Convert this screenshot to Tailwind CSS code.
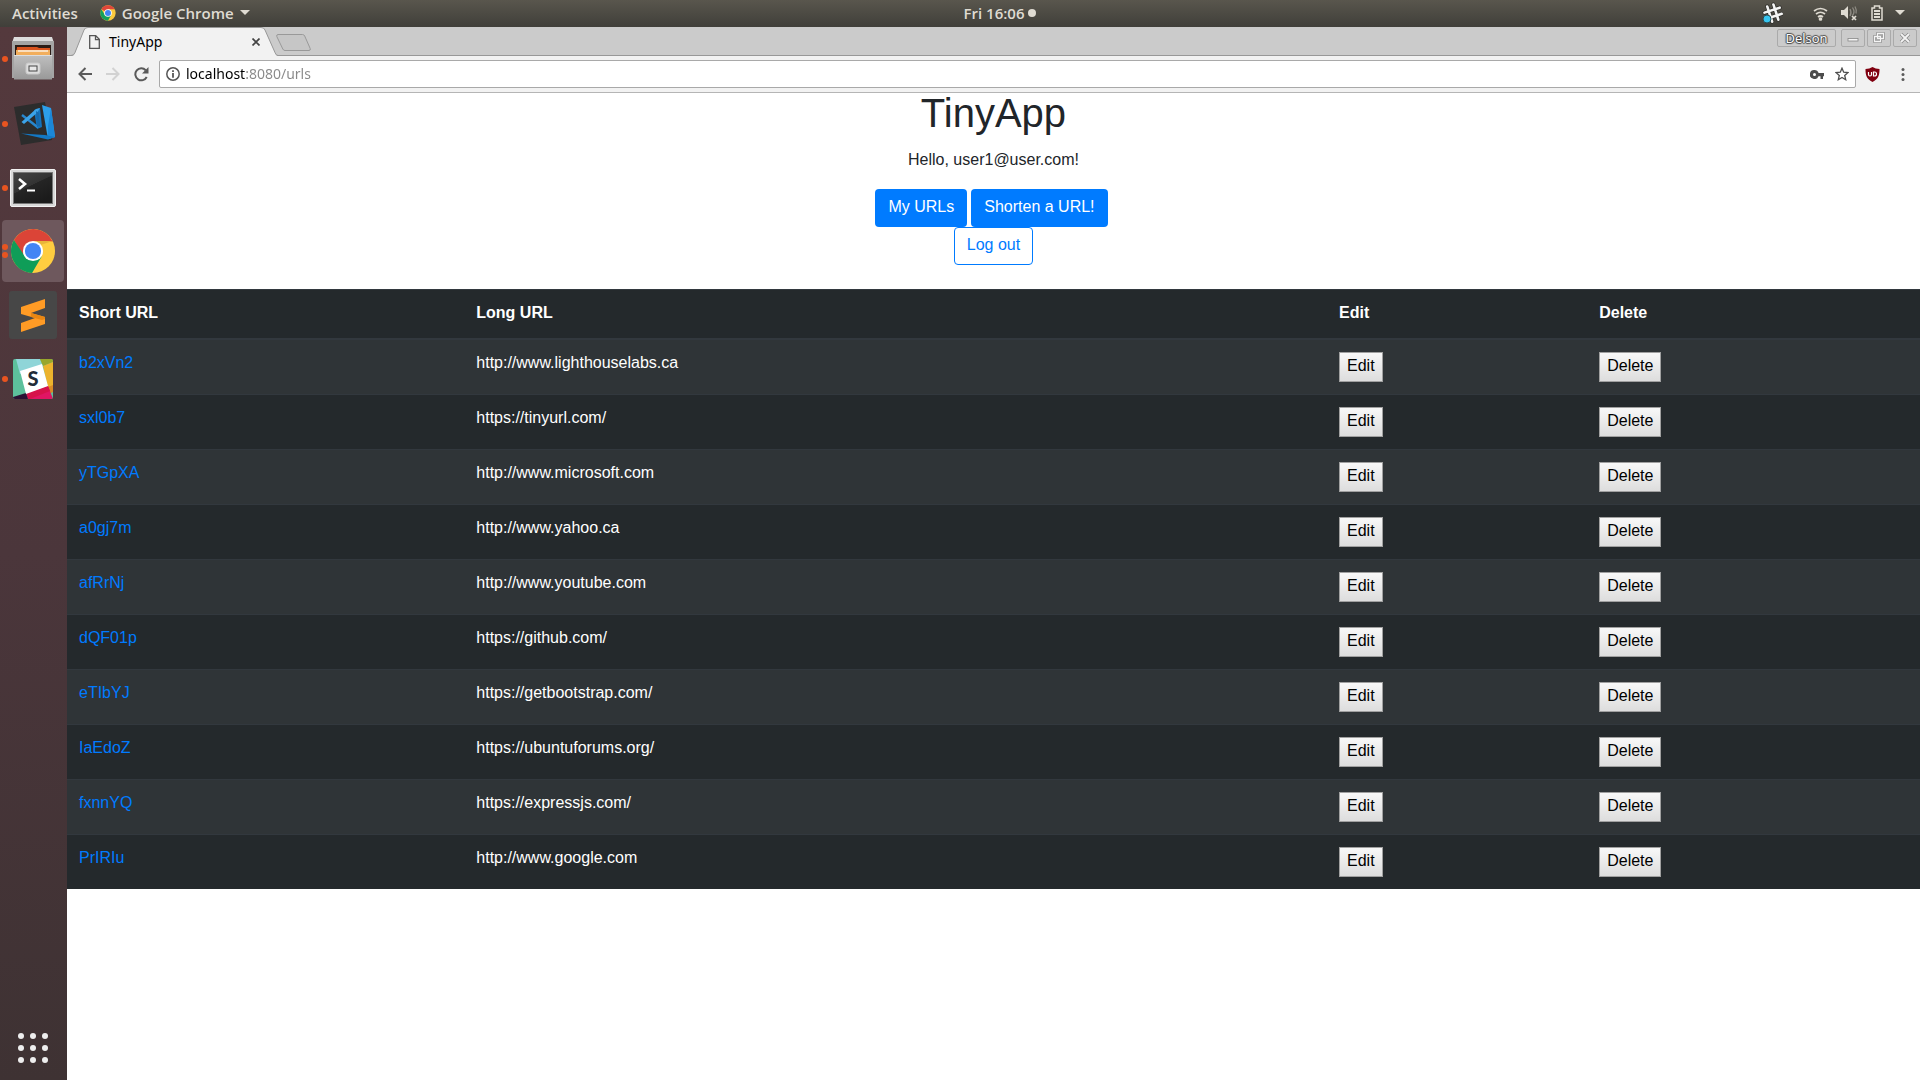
<!DOCTYPE html>
<html lang="en">
<head>
<meta charset="utf-8">
<title>TinyApp</title>
<script src="https://cdn.jsdelivr.net/npm/@tailwindcss/browser@4"></script>
</head>
<body class="flex min-h-screen flex-col bg-white font-['Liberation_Sans',Arial,sans-serif] text-base text-[#212529]">

<!-- System bar -->
<header class="grid h-[27px] grid-cols-[minmax(0,1fr)_auto_minmax(0,1fr)] items-center bg-linear-to-b from-[#59564d] to-[#403f3a] px-3 pb-[2px] font-['Open_Sans',sans-serif] text-[15px] font-semibold text-[#dfdbd2]">
  <div class="flex items-center gap-[22px]">
    <button class="leading-5">Activities</button>
    <button class="flex items-center leading-5">
      <svg class="mr-[6px] size-4" viewBox="0 0 48 48"><circle cx="24" cy="24" r="23" fill="#fbc93d"/><path d="M24 24 4 12.500A23 23 0 0 1 44 12.500H24Z" fill="#e0463a"/><path d="M4 12.500A23 23 0 0 0 24 47l10-17.500-20-1Z" fill="#15a05c"/><circle cx="24" cy="24" r="11.500" fill="#fff"/><circle cx="24" cy="24" r="9" fill="#4285f4"/></svg>
      Google Chrome
      <svg class="ml-[6px] h-[5px] w-[10px]" viewBox="0 0 10 5"><path d="M0 0h10L5 5Z" fill="#dfdbd2"/></svg>
    </button>
  </div>
  <button class="ml-20 flex items-center gap-1 leading-5">Fri 16:06 <span class="size-2 rounded-full bg-[#dfdbd2]"></span></button>
  <div class="flex items-center justify-end">
    <svg class="mr-[30px] h-[22px] w-[22px]" viewBox="0 0 22 22" fill="none"><g transform="rotate(-18 12 11)" stroke-linecap="round"><path d="M8.500 3v16M15 3v16M4 8h16M4 14.500h16" stroke="#2d2c28" stroke-width="4"/><path d="M8.500 3v16M15 3v16M4 8h16M4 14.500h16" stroke="#f4f4f4" stroke-width="2.600"/></g><circle cx="6" cy="17" r="4" fill="#36c5f0" stroke="#2d4a50"/></svg>
    <svg class="mr-[12px] h-4 w-[15px]" viewBox="0 0 15 16" fill="none" stroke="#dfdbd2" stroke-width="1.700"><path d="M1 6q6.500-5 13 0"/><path d="M3 9q4.500-3.500 9 0" /><path d="M5 12q2.500-2 5 0"/><circle cx="7.500" cy="14" r="1" fill="#dfdbd2"/></svg>
    <svg class="mr-[13px] h-4 w-[18px]" viewBox="0 0 18 16" fill="none"><path d="M1 5h3l4-4v13l-4-4H1Z" fill="#dfdbd2"/><path d="M10 4q2 3.500 0 7M12.500 2.500q3 4.500 0 8M15 1.500q2 3.500 1 7" stroke="#8d8a82" stroke-width="1.300"/><path d="m12 11 4 4m0-4-4 4" stroke="#dfdbd2" stroke-width="1.700"/></svg>
    <svg class="mr-[12px] h-4 w-3" viewBox="0 0 12 16" fill="none" stroke="#dfdbd2" stroke-width="1.500"><path d="M1 3h2.500V1h5v2H11v12H1Z"/><path d="M3 6h6M3 9h6M3 12h6" stroke-width="1.800"/></svg>
    <svg class="mr-[3px] h-[5px] w-[10px]" viewBox="0 0 10 5"><path d="M0 0h10L5 5Z" fill="#dfdbd2"/></svg>
  </div>
</header>

<div class="flex flex-1">
  <!-- Application dock -->
  <nav aria-label="Dock" class="flex w-[67px] shrink-0 flex-col items-stretch justify-between bg-linear-to-b from-[#54393d] via-[#4b363b] to-[#3e3233]">
    <div class="flex flex-col">
      <button aria-label="Files" class="flex h-16 items-center">
        <span class="flex w-3 flex-col items-center pr-[2px]"><span class="size-[6px] rounded-full bg-[#e95420]"></span></span>
        <svg class="h-11 w-[42px]" viewBox="0 0 42 44"><defs><linearGradient id="cab" x2="0" y2="1"><stop stop-color="#bfbfbf"/><stop offset="1" stop-color="#999"/></linearGradient></defs><path d="M2 0h38l2 6H0Z" fill="#dcdcdc"/><path d="M0 4h42v37H0Z" fill="#a4a4a4"/><path d="M3 8h36v11H3Z" fill="#2b1c16"/><path d="M5 10h20l2 1h11v8H4Z" fill="#d9541e"/><path d="M4 13h34v6H4Z" fill="#f2ae5c"/><path d="M6 14h30" stroke="#fff" stroke-width="1.200"/><path d="M2 18h38v24.500H2Z" fill="url(#cab)"/><path d="M2 18.500h38" stroke="#ddd"/><rect x="14" y="26" width="14" height="11" rx="2" fill="#ddd" stroke="#c8c8c8"/><rect x="17" y="29" width="8" height="5" fill="#e8e8e8" stroke="#444"/></svg>
      </button>
      <button aria-label="Visual Studio Code" class="flex h-16 items-center pt-[2px]">
        <span class="flex w-[14px] flex-col items-center pr-1"><span class="size-[6px] rounded-full bg-[#e95420]"></span></span>
        <svg class="h-[44px] w-[42px]" viewBox="0 0 42 44"><path d="M0 5 31 0l7 38-31 5Z" fill="#2c2c2c"/><path d="M28 3l9 3 4 29-7 2Z" fill="#2c9fea"/><path d="m34 37 7-2-4-29-3 18Z" fill="#1b87d8"/><path d="M7 31.500 31 33l10 2-7 2.500Z" fill="#1378c4"/><path d="m20 8 6-2 2 19-5 2Z" fill="#1473bd"/><path d="M8 13 24 25.500" stroke="#2787cf" stroke-width="2.400"/><path d="M7.500 20 22 7l4-1-3 5L10 22Z" fill="#3ba3e8"/><path d="m22 9 3 2 1 13-3 1Z" fill="#1668ab"/></svg>
      </button>
      <button aria-label="Terminal" class="flex h-16 items-center pt-[2px]">
        <span class="flex w-[10px] flex-col items-center"><span class="size-[6px] rounded-full bg-[#e95420]"></span></span>
        <svg class="h-[38px] w-[46px]" viewBox="0 0 46 38"><defs><linearGradient id="term" x2="0.600" y2="1"><stop stop-color="#444"/><stop offset="0.500" stop-color="#333"/><stop offset="0.510" stop-color="#252525"/><stop offset="1" stop-color="#1b1b1b"/></linearGradient></defs><rect x="0.500" y="0.500" width="45" height="37" rx="1.500" fill="#d9d9d9" stroke="#f2f2f2"/><rect x="3.500" y="3.500" width="39" height="31" fill="url(#term)" stroke="#777"/><path d="m9 10 6 5-6 5" fill="none" stroke="#fff" stroke-width="2.600"/><path d="M17 21.500h8" stroke="#fff" stroke-width="2"/></svg>
      </button>
      <button aria-label="Google Chrome" class="mx-[2px] my-px flex h-[62px] w-[62px] items-center rounded bg-[#6e585d]">
        <span class="flex w-[9px] flex-col items-center gap-[2px] pr-[3px]"><span class="size-[6px] rounded-full bg-[#e95420]"></span><span class="size-[6px] rounded-full bg-[#e95420]"></span></span>
        <svg class="size-11" viewBox="0 0 48 48"><circle cx="24" cy="24" r="24" fill="#ffcd40"/><path d="M3.200 12A24 24 0 0 1 45.500 13.500H24L13.500 30Z" fill="#db4437"/><path d="M3.200 12A24 24 0 0 0 23 48l10.500-18L14.500 29Z" fill="#0f9d58"/><path d="M24 13h21.500l-15 5Z" fill="#e9b53a"/><circle cx="24" cy="24" r="11" fill="#fff"/><circle cx="24" cy="24" r="8.800" fill="#4285f4"/></svg>
      </button>
      <button aria-label="Sublime Text" class="flex h-16 items-center pl-[9px]">
        <svg class="size-12" viewBox="0 0 48 48"><rect width="48" height="48" rx="3" fill="#474747"/><path d="M12 16 36 8v9l-14 5 14 4v7l-24 8v-9l14-5-14-4Z" fill="#ff9b25"/><path d="m22 22 14 4v2l-3 1-11-3Z" fill="#e88612"/></svg>
      </button>
      <button aria-label="Slack" class="flex h-16 items-center">
        <span class="flex w-[13px] flex-col items-center pr-[3px]"><span class="size-[6px] rounded-full bg-[#e95420]"></span></span>
        <svg class="size-10" viewBox="0 0 40 40"><defs><clipPath id="sq"><rect width="40" height="40" rx="2"/></clipPath></defs><g clip-path="url(#sq)"><path d="M0 0h40v40H0Z" fill="#5dc09c"/><path d="M3 0h24l3 7-23 8Z" fill="#8fd5d8"/><path d="M27 0h13v3L30 7Z" fill="#98a62c"/><path d="M30 7 40 3v24l-5 2Z" fill="#ecb32d"/><path d="m35 28 5-2v7l-4 2Z" fill="#d98a26"/><path d="m13 34 22-7 5 13H15Z" fill="#e01563"/><path d="m13 34 22-7 2 5-20 8h-2Z" fill="#d6124a"/><path d="m0 38 13-4 2 6H0Z" fill="#2b1234"/><path d="M7 12 29 5l6 22-22 8Z" fill="#fff"/></g><text x="20" y="27" text-anchor="middle" font-family="Lato,sans-serif" font-weight="900" font-size="20" fill="#222c38">S</text></svg>
      </button>
    </div>
    <button aria-label="Show Applications" class="flex h-16 items-center justify-center pr-[2px]">
      <svg class="size-[30px]" viewBox="0 0 30 30" fill="#eee"><circle cx="3" cy="3" r="3"/><circle cx="15" cy="3" r="3"/><circle cx="27" cy="3" r="3"/><circle cx="3" cy="15" r="3"/><circle cx="15" cy="15" r="3"/><circle cx="27" cy="15" r="3"/><circle cx="3" cy="27" r="3"/><circle cx="15" cy="27" r="3"/><circle cx="27" cy="27" r="3"/></svg>
    </button>
  </nav>

  <!-- Browser window -->
  <div class="flex min-w-0 flex-1 flex-col">
    <div class="flex h-[29px] items-start border-b border-[#989898] bg-[#cbcbcb] font-['Noto_Sans',sans-serif] text-sm">
      <div class="relative ml-1 flex h-[29px] w-[207px] items-center pr-[18px] pl-[18px]">
        <svg class="absolute inset-0 h-[29px] w-[207px]" viewBox="0 0 207 29"><path d="M0 29q3 0 4-3L13 3q1-2.500 4-2.500h173q3 0 4 2.500l10 23q1 3 3 3Z" fill="#f2f2f2"/><path d="M0 28.500q3 0 4-3L13 3q1-2.500 4-2.500h173q3 0 4 2.500l10 22.500q1 3 3 3" fill="none" stroke="#989898"/></svg>
        <svg class="relative mr-[9px] h-[14px] w-[11px]" viewBox="0 0 11 14" fill="none" stroke="#555" stroke-width="1.300"><path d="M.7.700h6l3.600 3.600v9H.7Z"/><path d="M6.500.700v4h4"/></svg>
        <span class="relative flex-1 leading-5 text-black">TinyApp</span>
        <button aria-label="Close tab" class="relative"><svg class="size-2" viewBox="0 0 8 8"><path d="m0.500 0.500 7 7m0-7-7 7" stroke="#444" stroke-width="1.700"/></svg></button>
      </div>
      <button aria-label="New tab" class="mt-[7px] -ml-[2px]"><svg class="h-[17px] w-[35px]" viewBox="0 0 35 17"><path d="M2 .5h24.500q1.500 0 2.200 1.500l5.500 12.500q.6 2-1.200 2H9q-1.500 0-2.200-1.500L.8 2.500Q.3.500 2 .5Z" fill="#c6c6c6" stroke="#999"/></svg></button>
      <div class="mt-[2px] mr-[3px] ml-auto flex text-[#f4f4f4] *:flex *:h-[18px] *:items-center *:justify-center *:rounded-xs *:border *:border-[#aaa]">
        <button class="mr-[5px] w-[59px] font-['Open_Sans',sans-serif] text-[13px] leading-4 text-white [text-shadow:1px_0_1px_#444,-1px_0_1px_#444,0_1px_1px_#444,0_-1px_1px_#444]">Delson</button>
        <button aria-label="Minimize" class="mr-[2px] w-6"><svg class="h-3 w-3" viewBox="0 0 12 12"><rect x="1" y="6.500" width="10" height="2.500" fill="#f4f4f4" stroke="#888" stroke-width=".8"/></svg></button>
        <button aria-label="Restore" class="mr-[2px] w-6"><svg class="h-3 w-3" viewBox="0 0 12 12" fill="none"><path d="M4.500 1.500h6v5h-6ZM1.500 4.500h6v5h-6Z" stroke="#888" stroke-width="2.600"/><path d="M4.500 1.500h6v5h-6ZM1.500 4.500h6v5h-6Z" stroke="#f4f4f4" stroke-width="1.300"/></svg></button>
        <button aria-label="Close" class="w-6"><svg class="h-3 w-3" viewBox="0 0 12 12"><path d="m2 2 8 8m0-8-8 8" stroke="#888" stroke-width="3.200"/><path d="m2 2 8 8m0-8-8 8" stroke="#f4f4f4" stroke-width="1.800"/></svg></button>
      </div>
    </div>
    <div class="flex h-[37px] items-center border-b border-[#b5b5b5] bg-[#f2f2f2] pr-3 pl-[11px]">
      <button aria-label="Back" class="mr-[14px]"><svg class="size-[14px]" viewBox="0 0 14 14" fill="none" stroke="#5a5a5a" stroke-width="2"><path d="M14 7H1.500M7.500 1l-6 6 6 6"/></svg></button>
      <button aria-label="Forward" class="mr-[14px]"><svg class="size-[14px]" viewBox="0 0 14 14" fill="none" stroke="#d2d2d2" stroke-width="2"><path d="M0 7h12.500M6.500 1l6 6-6 6"/></svg></button>
      <button aria-label="Reload" class="mr-[10px]"><svg class="size-[15px]" viewBox="0 0 15 15" fill="none"><path d="M12.700 10A6 6 0 1 1 11.700 3.200" stroke="#5a5a5a" stroke-width="2"/><path d="M14.500 0v6.500H8Z" fill="#5a5a5a"/></svg></button>
      <div class="flex h-7 flex-1 items-center rounded-xs border border-[#a9a9a9] bg-white pr-[6px] pl-[6px]">
        <svg class="mr-[6px] size-[14px]" viewBox="0 0 14 14"><circle cx="7" cy="7" r="6.200" fill="none" stroke="#555" stroke-width="1.500"/><path d="M6.100 6h1.800v4.800H6.100ZM6.100 3.200h1.800V5H6.100Z" fill="#555"/></svg>
        <input aria-label="Address" value="localhost:8080/urls" class="h-5 min-w-0 flex-1 bg-linear-to-r from-black from-[60px] to-[#888] to-[60px] bg-clip-text font-['Noto_Sans',sans-serif] text-sm text-transparent outline-none">
        <button aria-label="Saved passwords" class="mr-[11px]"><svg class="h-[9px] w-[14px]" viewBox="0 0 14 9"><path d="M4.500 0a4.500 4.500 0 1 0 4 6.200h2V9h2.500V6.200h1V3H8.600A4.500 4.500 0 0 0 4.500 0Zm0 3a1.500 1.500 0 1 1 0 3 1.500 1.500 0 0 1 0-3Z" fill="#4d4d4d"/></svg></button>
        <button aria-label="Bookmark this page"><svg class="size-[14px]" viewBox="0 0 14 14"><path d="m7 1.200 1.700 4 4.300.4-3.300 2.900 1 4.200L7 10.500l-3.700 2.200 1-4.200L1 5.600l4.300-.4Z" fill="none" stroke="#4d4d4d" stroke-width="1.300"/></svg></button>
      </div>
      <button aria-label="Content blocker" class="mr-[18px] ml-[9px]"><svg class="h-[15px] w-[15px]" viewBox="0 0 15 15"><path d="M7.500 0q3 2 7 2c0 6-1 10-7 13C1.500 12 .5 8 .5 2q4 0 7-2Z" fill="#800010"/><path d="M3.500 5v2.500q0 1.500 1.500 1.500t1.500-1.500V5M8.500 9V5h1a2 2 0 0 1 0 4Z" fill="none" stroke="#fff" stroke-width="1.200"/></svg></button>
      <button aria-label="Menu"><svg class="h-[13px] w-[10px]" viewBox="0 0 10 13" fill="#5a5a5a"><circle cx="5" cy="1.500" r="1.500"/><circle cx="5" cy="6.500" r="1.500"/><circle cx="5" cy="11.500" r="1.500"/></svg></button>
    </div>

    <main>
      <div class="flex flex-col items-center pb-6">
        <h1 class="pb-[15px] text-[40px] leading-10">TinyApp</h1>
        <p class="pb-[17px] leading-6">Hello, user1@user.com!</p>
        <div class="flex gap-1 pr-1">
          <a href="#" class="rounded bg-[#007bff] px-[13px] pt-[6px] pb-2 leading-6 text-white">My URLs</a>
          <a href="#" class="rounded bg-[#007bff] px-[13px] pt-[6px] pb-2 leading-6 text-white">Shorten a URL!</a>
        </div>
        <button class="rounded border border-[#007bff] px-3 pt-[5px] pb-[7px] leading-6 text-[#007bff]">Log out</button>
      </div>

      <table class="w-full table-fixed border-collapse bg-[#24292c] text-left leading-6 text-white">
        <thead>
          <tr class="*:border-t *:border-b-2 *:border-[#32383e] *:px-3 *:pt-[11px] *:pb-[13px]">
            <th class="w-[21.44%]">Short URL</th><th class="w-[46.56%]">Long URL</th><th class="w-[14.04%]">Edit</th><th>Delete</th>
          </tr>
        </thead>
        <tbody id="rows"></tbody>
      </table>
    </main>
  </div>
</div>

<script>
  const urls = [
    ["b2xVn2", "http://www.lighthouselabs.ca"],
    ["sxl0b7", "https://tinyurl.com/"],
    ["yTGpXA", "http://www.microsoft.com"],
    ["a0gj7m", "http://www.yahoo.ca"],
    ["afRrNj", "http://www.youtube.com"],
    ["dQF01p", "https://github.com/"],
    ["eTIbYJ", "https://getbootstrap.com/"],
    ["IaEdoZ", "https://ubuntuforums.org/"],
    ["fxnnYQ", "https://expressjs.com/"],
    ["PrIRIu", "http://www.google.com"],
  ];
  const button = label => `<button class="block h-[30px] border border-[#a0a0a0] bg-linear-to-b from-[#f8f8f8] to-[#dddddd] px-[7px] pb-[2px] leading-6 text-black">${label}</button>`;
  document.getElementById("rows").innerHTML = urls.map(([id, url]) => `
    <tr class="odd:bg-[#2f3437] *:border-t *:border-[#32383e] *:px-3 *:align-top">
      <td class="pt-[11px]"><a href="#" class="text-[#007bff]">${id}</a></td>
      <td class="pt-[11px]">${url}</td>
      <td class="py-3">${button("Edit")}</td>
      <td class="py-3">${button("Delete")}</td>
    </tr>`).join("");
</script>
</body>
</html>
